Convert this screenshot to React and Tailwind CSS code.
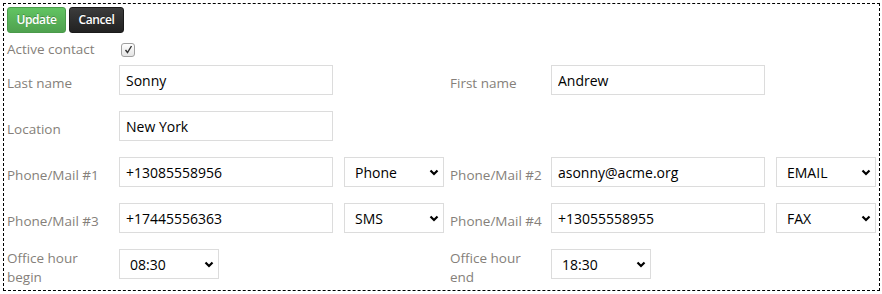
const labelCls = "w-[92px] text-[13.5px] leading-[19px] text-[#857f7a]";
const inputCls =
  "w-[214px] h-[30px] border border-[#dcdcdc] bg-white pl-[6px] text-[14px] text-black outline-none";

function TextBox({ value }) {
  return (
    <div className="self-start">
      <input type="text" defaultValue={value} className={inputCls} />
    </div>
  );
}

function Select({ value, options, width = "w-[100px]" }) {
  return (
    <div className={`relative self-start ${width}`}>
      <select
        defaultValue={value}
        className="w-full h-[30px] appearance-none border border-[#dcdcdc] bg-white pl-[10px] text-[14px] text-black outline-none"
      >
        {options.map((o) => (
          <option key={o}>{o}</option>
        ))}
      </select>
      <svg
        className="pointer-events-none absolute right-[5px] top-[12px]"
        width="10"
        height="7"
        viewBox="0 0 10 7"
      >
        <path d="M1.5 1.5 L5 5 L8.5 1.5" fill="none" stroke="#000" strokeWidth="2.2" />
      </svg>
    </div>
  );
}

const kinds = ["Phone", "SMS", "EMAIL", "FAX"];
const hours = ["08:00", "08:30", "09:00", "17:30", "18:00", "18:30"];

function Row({ children }) {
  return (
    <div className="grid h-[36px] grid-cols-[112px_225px_106px_101px_225px_100px] items-center">
      {children}
    </div>
  );
}

export default function App() {
  return (
    <div className="ml-[3px] mt-[3px] w-[877px] border border-dashed border-black px-[3px] pt-[3px] pb-[5px] font-['Open_Sans',sans-serif]">
      <div className="flex gap-[3px]">
        <button className="h-[26px] w-[59px] rounded-[3px] border border-[#4a9a4a] bg-gradient-to-b from-[#62c462] to-[#4fa14f] text-[12px] font-semibold tracking-[-0.4px] text-white [text-shadow:0_-1px_0_rgba(0,0,0,0.25)]">
          Update
        </button>
        <button className="h-[26px] w-[55px] rounded-[3px] border border-[#1a1a1a] bg-gradient-to-b from-[#3c3c3c] to-[#222] text-[12px] font-semibold tracking-[-0.4px] text-white [text-shadow:0_-1px_0_rgba(0,0,0,0.25)]">
          Cancel
        </button>
      </div>

      <div className="mt-[7px] grid h-[16px] grid-cols-[112px_auto] items-center">
        <span className={labelCls + " w-auto"}>Active contact</span>
        <span className="ml-[2px] flex h-[14px] w-[14px] items-center justify-center rounded-[3px] border border-[#a0a0a0] bg-gradient-to-b from-white to-[#e4e4e4]">
          <svg width="9" height="9" viewBox="0 0 9 9">
            <path d="M1.5 5 L3.5 7.5 L7.5 1" fill="none" stroke="#333" strokeWidth="1.4" />
          </svg>
        </span>
      </div>

      <div className="mt-[9px] flex flex-col gap-[10px]">
        <Row>
          <span className={labelCls}>Last name</span>
          <TextBox value="Sonny" />
          <span />
          <span className={labelCls}>First name</span>
          <TextBox value="Andrew" />
          <span />
        </Row>
        <Row>
          <span className={labelCls}>Location</span>
          <TextBox value="New York" />
        </Row>
        <Row>
          <span className={labelCls}>Phone/Mail #1</span>
          <TextBox value="+13085558956" />
          <Select value="Phone" options={kinds} />
          <span className={labelCls}>Phone/Mail #2</span>
          <TextBox value="asonny@acme.org" />
          <Select value="EMAIL" options={kinds} />
        </Row>
        <Row>
          <span className={labelCls}>Phone/Mail #3</span>
          <TextBox value="+17445556363" />
          <Select value="SMS" options={kinds} />
          <span className={labelCls}>Phone/Mail #4</span>
          <TextBox value="+13055558955" />
          <Select value="FAX" options={kinds} />
        </Row>
        <Row>
          <span className={labelCls}>Office hour begin</span>
          <Select value="08:30" options={hours} />
          <span />
          <span className={labelCls}>Office hour end</span>
          <Select value="18:30" options={hours} />
          <span />
        </Row>
      </div>
    </div>
  );
}
